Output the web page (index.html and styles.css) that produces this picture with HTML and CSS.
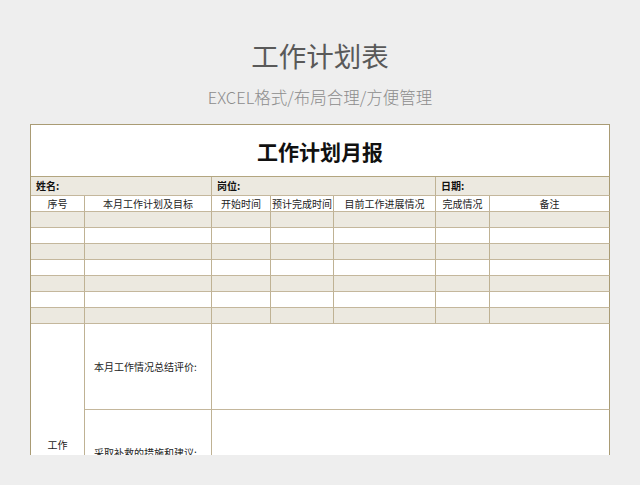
FILE: index.html
```html
<!DOCTYPE html>
<html lang="zh">
<head>
<meta charset="utf-8">
<link rel="stylesheet" href="styles.css">
</head>
<body>
<header class="head">
  <h1 class="head-title">工作计划表</h1>
  <p class="head-sub">EXCEL格式/布局合理/方便管理</p>
</header>
<div class="sheet">
  <table class="grid">
    <colgroup>
      <col class="c1"><col class="c2"><col class="c3"><col class="c4"><col class="c5"><col class="c6"><col class="c7">
    </colgroup>
    <tr class="r-title"><td colspan="7" class="title-cell">工作计划月报</td></tr>
    <tr class="r-info">
      <td colspan="2" class="info">姓名:</td>
      <td colspan="3" class="info">岗位:</td>
      <td colspan="2" class="info">日期:</td>
    </tr>
    <tr class="r-head">
      <td>序号</td><td>本月工作计划及目标</td><td>开始时间</td><td>预计完成时间</td><td>目前工作进展情况</td><td>完成情况</td><td>备注</td>
    </tr>
    <tr class="r-data alt"><td></td><td></td><td></td><td></td><td></td><td></td><td></td></tr>
    <tr class="r-data"><td></td><td></td><td></td><td></td><td></td><td></td><td></td></tr>
    <tr class="r-data alt"><td></td><td></td><td></td><td></td><td></td><td></td><td></td></tr>
    <tr class="r-data"><td></td><td></td><td></td><td></td><td></td><td></td><td></td></tr>
    <tr class="r-data alt"><td></td><td></td><td></td><td></td><td></td><td></td><td></td></tr>
    <tr class="r-data"><td></td><td></td><td></td><td></td><td></td><td></td><td></td></tr>
    <tr class="r-data alt"><td></td><td></td><td></td><td></td><td></td><td></td><td></td></tr>
    <tr class="r-big">
      <td rowspan="3" class="side">工作<br>总结</td>
      <td class="label">本月工作情况总结评价:</td>
      <td colspan="5"></td>
    </tr>
    <tr class="r-big">
      <td class="label">采取补救的措施和建议:</td>
      <td colspan="5"></td>
    </tr>
    <tr class="r-big">
      <td class="label"></td>
      <td colspan="5"></td>
    </tr>
  </table>
</div>
</body>
</html>
```

FILE: styles.css
```css
html, body {
  margin: 0;
  padding: 0;
}
body {
  background: #eeeeee;
  font-family: "Noto Sans CJK SC", "Noto Sans", sans-serif;
  width: 640px;
  height: 485px;
  overflow: hidden;
}
.head {
  display: flex;
  flex-direction: column;
  align-items: center;
  padding-top: 37px;
}
.head-title {
  margin: 0;
  font-size: 27.5px;
  line-height: 36px;
  font-weight: 400;
  color: #595959;
}
.head-sub {
  margin: 14px 0 0;
  font-size: 16.5px;
  line-height: 20px;
  font-weight: 300;
  color: #8c8c8c;
}
.sheet {
  margin: 17px 0 0 30px;
  width: 580px;
  height: 331px;
  overflow: hidden;
  background: #ffffff;
}
.grid {
  width: 580px;
  table-layout: fixed;
  border-collapse: separate;
  border-spacing: 0;
  border-top: 1px solid #a99b74;
  border-left: 1px solid #a99b74;
  font-size: 10px;
  color: #222222;
}
.c1 { width: 54px; }
.c2 { width: 127px; }
.c3 { width: 59px; }
.c4 { width: 63px; }
.c5 { width: 102px; }
.c6 { width: 54px; }
.c7 { width: 120px; }
.grid td {
  box-sizing: border-box;
  padding: 0;
  border-right: 1px solid #bfb294;
  border-bottom: 1px solid #c4b79c;
  text-align: center;
  vertical-align: middle;
  line-height: 14px;
  white-space: nowrap;
  overflow: hidden;
}
.grid td:last-child {
  border-right-color: #a99b74;
}
.r-title td {
  height: 52px;
  font-size: 21px;
  font-weight: 700;
  color: #111111;
  border-bottom-color: #b3a680;
}
.r-info td {
  height: 19px;
  background: #ece9e0;
  text-align: left;
  padding-left: 5px;
  font-weight: 700;
  color: #111111;
}
.r-head td {
  height: 16px;
}
.r-data td {
  height: 16px;
}
.r-data.alt td {
  background: #ece9e0;
}
.r-big td {
  height: 86px;
}
.grid .label {
  text-align: left;
  padding-left: 9px;
}
.grid .side {
  line-height: 20px;
  padding-top: 4px;
}
```
